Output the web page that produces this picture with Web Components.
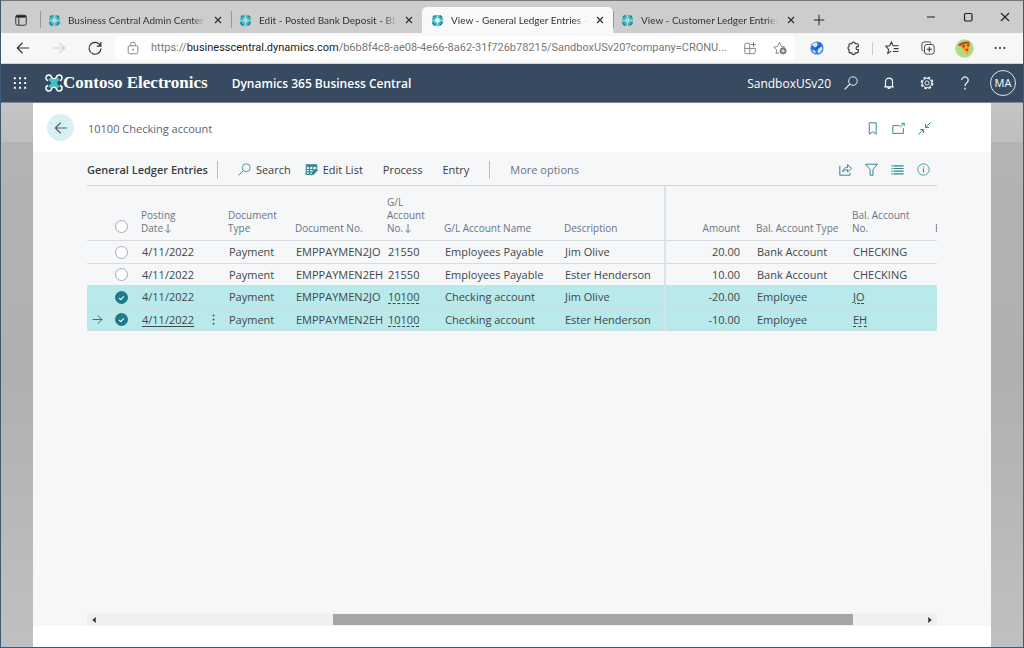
<!DOCTYPE html>
<html lang="en">
<head>
<meta charset="utf-8">
<title>View - General Ledger Entries</title>
<style>
    html, body {
        height: 100%;
        margin: 0;
    }
    body {
        font-family: "Open Sans", "Noto Sans", sans-serif;
        font-size: 11px;
        line-height: 16px;
        color: #444749;
        overflow: hidden;
    }
</style>
</head>
<body>
<browser-window>
    <browser-tab slot="tab">Business Central Admin Center</browser-tab>
    <browser-tab slot="tab">Edit - Posted Bank Deposit - BD000</browser-tab>
    <browser-tab slot="tab" active>View - General Ledger Entries - 10100</browser-tab>
    <browser-tab slot="tab">View - Customer Ledger Entries - 10</browser-tab>
    <browser-toolbar slot="toolbar"></browser-toolbar>
    <app-header company="Contoso Electronics" environment="SandboxUSv20" initials="MA">Dynamics 365 Business Central</app-header>
    <page-dialog>
        <span slot="title">10100 Checking account</span>
        <action-bar slot="actions">General Ledger Entries</action-bar>
        <ledger-table></ledger-table>
        <scroll-strip slot="scroll"></scroll-strip>
    </page-dialog>
</browser-window>

<script>
const icons = {
    tabs: '<rect x="2" y="2.500" width="12" height="11.500" rx="2"/><path d="M2.500 4h11" stroke-width="2.500"/><path d="M5.500 5v9"/>',
    close: '<path d="M4 4l8 8M12 4l-8 8" stroke-width="1.700"/>',
    plus: '<path d="M8 1v14M1 8h14" stroke-width="1.300"/>',
    minimize: '<path d="M4 8h8"/>',
    maximize: '<rect x="4.500" y="4.500" width="7.500" height="7.500" rx="1.200" stroke-width="1.200"/>',
    exit: '<path d="M4 4l8 8M12 4l-8 8" stroke-width="1.100"/>',
    back: '<path d="M15 8H1.500M7.500 2L1.500 8l6 6" stroke-width="1.300"/>',
    forward: '<path d="M1 8H14.500M8.500 2l6 6-6 6" stroke-width="1.200"/>',
    reload: '<path d="M14.200 5.500A6.800 6.800 0 1 0 14.800 8.500M14.700 1v4.800H10" stroke-width="1.400"/>',
    lock: '<rect x="2.500" y="5.500" width="11" height="9" rx="1.500"/><path d="M5.200 5.500V4a2.800 2.800 0 0 1 5.600 0v1.500"/><circle cx="8" cy="10" r=".6" fill="currentColor"/>',
    apps: '<path d="M7.500 2.500H3.500A1.500 1.500 0 0 0 2 4v9A1.500 1.500 0 0 0 3.500 14.500h9a1.500 1.500 0 0 0 1.500-1.500V8.500M2 8.500h12M7.800 2.500v12M12 1v6M9 4h6"/>',
    staradd: '<path d="M7 13l-3.500 1.500.6-4.400L1 7l4.200-.7L7.500 1.500l2.200 4.800 4.300.6"/><circle cx="11.500" cy="11.300" r="3.500" fill="currentColor"/><path d="M11.500 9.300v4M9.500 11.300h4" stroke="#fff"/>',
    globe: '<circle cx="8" cy="8" r="7.500" fill="#2b76d8" stroke="none"/><path d="M2 5c2 0 3 2 4.500 2.200L9 4.500 7.500 1.500C5 1.500 3 2.700 2 5zM9 9.500l4.500-3.500 1 3-3.500 5-2.500-1zM2.500 10l3.500 1 .5 3C4.500 14 3 12.500 2.500 10z" fill="#cfe6fb" stroke="none"/><path d="M6 10l6-6" stroke="#1a5fb4" stroke-width="1.600"/>',
    puzzle: '<path d="M4.500 3.200h2a2 2 0 0 1 4 0h2.500a1 1 0 0 1 1 1v2.300h-.8a1.700 1.700 0 0 0 0 3.400h.8v2.600a1 1 0 0 1-1 1h-2.500a2 2 0 0 1-4 0h-2a1 1 0 0 1-1-1V9.900a1.900 1.900 0 0 1 0-3.600V4.200a1 1 0 0 1 1-1z" stroke-width="1.300"/>',
    favorites: '<path d="M7 11.500l-3.800 2.700.9-4.700L1 6l4.400-.6L7.300 1.200l1.900 4.200M9.200 5.500H15.500M10 8.700h5.500M9 12h6.500" stroke-width="1.200"/>',
    collections: '<path d="M3 11.500A2.200 2.200 0 0 1 1 9.500V3.500A2.500 2.500 0 0 1 3.500 1h6a2.200 2.200 0 0 1 2 2"/><rect x="4" y="4" width="11" height="11" rx="2.500"/><path d="M9.500 6.500v6M6.500 9.500h6" stroke-width="1.200"/>',
    pizza: '<circle cx="8" cy="8" r="7.800" fill="#b5d98a" stroke="none"/><path d="M3 4.800l8.500-2.300 1.600 1.400-2.200 9.600z" fill="#f0a52d" stroke="none"/><path d="M2.600 4.600Q7 1.200 12 2.300l.3 1.600Q7.500 3.300 3.600 6z" fill="#9a5524" stroke="none"/><g fill="#c3362b" stroke="none"><circle cx="7.300" cy="6" r="1.100"/><circle cx="11" cy="5.300" r="1"/><circle cx="10" cy="9" r="1.100"/></g>',
    more: '<g fill="currentColor" stroke="none"><circle cx="3" cy="8" r="1.200"/><circle cx="8" cy="8" r="1.200"/><circle cx="13" cy="8" r="1.200"/></g>',
    waffle: '<path d="M1 2.500h2.200M6.900 2.500h2.200M12.800 2.500h2.200M1 8h2.200M6.900 8h2.200M12.800 8h2.200M1 13.500h2.200M6.900 13.500h2.200M12.800 13.500h2.200" stroke-width="2.200"/>',
    search: '<circle cx="10.200" cy="5.800" r="4.900"/><path d="M6.700 9.300L.8 15.200" stroke-width="1.200"/>',
    bell: '<path d="M2.500 12.500h11M4 12.300V6.500a4 4 0 0 1 8 0v5.800M6.700 13a1.300 1.300 0 0 0 2.600 0" stroke-width="1.300"/>',
    gear: '<circle cx="8" cy="8" r="6.500" stroke-width="1.600" stroke-dasharray="3 2.105"/><circle cx="8" cy="8" r="5.300"/><circle cx="8" cy="8" r="2.400"/>',
    help: '<path d="M4.300 4.700a3.700 3.700 0 1 1 6 2.900C8.800 8.700 8 9.200 8 11.500" stroke-width="1.300"/><path d="M8 13.500v1.800" stroke-width="1.600"/>',
    bookmark: '<path d="M4 1h8.500v14l-4.200-3L4 15z" stroke-width="1.200"/>',
    popout: '<path d="M9.500 4.500H1v9.500h13V7.500M10 6.500l4.500-4.500M11.500 1.500h3.500v3.500" stroke-width="1.200"/>',
    collapse: '<path d="M15.500.5l-6 6M9.300 2.500v4.200h4.200M.5 15.500l6-6M2.500 9.300h4.200v4.200" stroke-width="1.200"/>',
    share: '<path d="M1 3.500v11.500H13.500v-3M4.500 11c.3-4 2.500-5.500 6-5.500V2l5 4.500-5 4.500V8.300c-2.700 0-4.300.5-6 2.700z" stroke-width="1.200"/>',
    filter: '<path d="M.8 1.500h14.500l-5.500 6.500v7H6.300V8z" stroke-width="1.200"/>',
    list: '<path d="M.5 3.500h1.500M3 3.500h12.500M.5 6.800h1.500M3 6.800h12.500M.5 10h1.500M3 10h12.500M.5 13.300h1.500M3 13.300h12.500" stroke-width="1.400"/>',
    info: '<circle cx="8" cy="8" r="7"/><path d="M8 6.800v5M8 4.200v1.300" stroke-width="1.300"/>',
    editlist: '<path d="M1.500 2h13v2.500h-13z" fill="currentColor"/><path d="M1.500 5v9H8M1.500 8h10M1.500 11h7M5.500 5v9M9.700 5v5.500M14.500 5v2" stroke-width="1.400"/><path d="M7.500 15.500l1-4 5-5 2.500 2.500-5 5z" fill="currentColor" stroke="none"/>',
    down: '<path d="M8 0v13.500M4 9.700l4 4 4-4" stroke-width="1.500"/>',
    dots: '<g fill="currentColor" stroke="none"><circle cx="8" cy="2" r="1.300"/><circle cx="8" cy="8" r="1.300"/><circle cx="8" cy="14" r="1.300"/></g>',
    left: '<path d="M10 4.500v7L6 8z" fill="currentColor" stroke="none"/>',
    right: '<path d="M6 4.500v7L10 8z" fill="currentColor" stroke="none"/>',
    favicon: '<circle cx="8" cy="8" r="5" stroke="#35bcc4" stroke-width="4"/><path d="M2.500 4A6.500 6.500 0 0 1 5 2M11 2a6.500 6.500 0 0 1 2.500 2.500M14 10.500a6.500 6.500 0 0 1-3 3M5 14a6.500 6.500 0 0 1-3-3" stroke="#1b808c" stroke-width="1.800"/><path d="M8 1v4M8 11v4M1 8h4M11 8h4" stroke="#8fe3e8" stroke-width="1.500"/>',
    drone: '<path d="M4 4l8 8M12 4l-8 8" stroke="#41c0c4" stroke-width="3"/><circle cx="8" cy="8" r="2.500" fill="#41c0c4" stroke="none"/><g stroke="#fff" stroke-width="1.300"><path d="M2.800 5.800A2.500 2.500 0 1 1 5.800 2.800Q8 6 10.200 2.800A2.500 2.500 0 1 1 13.200 5.800M13.200 10.200A2.500 2.500 0 1 1 10.200 13.200Q8 10 5.800 13.200A2.500 2.500 0 1 1 2.800 10.200"/></g>'
}

class ShadowComponent extends HTMLElement {
    constructor() {
        super()
        this.attachShadow({ mode: 'open' })
    }

    connectedCallback() {
        const template = document.createElement('template')
        template.innerHTML = this.render()
        this.shadowRoot.replaceChildren(template.content.cloneNode(true))
    }
}

// Resets shared by everything that holds buttons
const buttonStyle = `
    button {
        font: inherit;
        color: inherit;
        background: none;
        border: none;
        padding: 0;
        margin: 0;
        display: flex;
        flex: none;
        align-items: center;
        justify-content: center;
    }
`

class LineIcon extends ShadowComponent {
    render() {
        return `
            <style>
                :host {
                    display: inline-block;
                    flex: none;
                    width: var(--icon-size, 14px);
                    height: var(--icon-size, 14px);
                }
                svg {
                    display: block;
                    width: 100%;
                    height: 100%;
                    overflow: visible;
                }
            </style>
            <svg viewBox="0 0 16 16" fill="none" stroke="currentColor" aria-hidden="true">${icons[this.getAttribute("name")]}</svg>
        `
    }
}

class BrowserWindow extends ShadowComponent {
    render() {
        return `
            <style>
                ${buttonStyle}
                :host {
                    display: flex;
                    flex-direction: column;
                    height: 100vh;
                    box-sizing: border-box;
                    border: 1px solid #3c5a72;
                    border-top-color: #77757a;
                    background: #b4b4b4;
                }
                .strip {
                    display: flex;
                    flex: none;
                    height: 32px;
                    background: #cdcdcd;
                    color: #222;
                }
                .strip > button {
                    width: 39px;
                    margin-top: 6px;
                }
                .strip > .add {
                    width: 29px;
                    --icon-size: 12px;
                }
                .controls {
                    display: flex;
                    margin-left: auto;
                }
                .controls button {
                    width: 37px;
                }
                .controls line-icon {
                    --icon-size: 16px;
                }
            </style>
            <div class="strip">
                <button aria-label="Tab actions"><line-icon name="tabs"></line-icon></button>
                <slot name="tab"></slot>
                <button class="add" aria-label="New tab"><line-icon name="plus"></line-icon></button>
                <div class="controls">
                    <button aria-label="Minimize"><line-icon name="minimize"></line-icon></button>
                    <button aria-label="Maximize"><line-icon name="maximize"></line-icon></button>
                    <button aria-label="Close"><line-icon name="exit"></line-icon></button>
                </div>
            </div>
            <slot name="toolbar"></slot>
            <slot></slot>
        `
    }
}

class BrowserTab extends ShadowComponent {
    render() {
        return `
            <style>
                ${buttonStyle}
                :host {
                    display: flex;
                    flex: 0 1 191px;
                    min-width: 0;
                    align-items: center;
                    gap: 7px;
                    box-sizing: border-box;
                    margin-top: 6px;
                    padding: 0 7px;
                    border-left: 1px solid #999;
                    border-image: linear-gradient(transparent 5px, #999 5px 20px, transparent 20px) 1;
                    font-family: Lato, sans-serif;
                    font-size: 10px;
                    color: #333;
                }
                :host([active]) {
                    border: none;
                    border-radius: 5px 5px 0 0;
                    padding: 0 7px 0 9px;
                    background: #f9f9f9;
                }
                .title {
                    flex: 1;
                    overflow: hidden;
                    white-space: nowrap;
                    mask-image: linear-gradient(to right, #000 calc(100% - 12px), transparent);
                }
                line-icon {
                    --icon-size: 13px;
                }
                button line-icon {
                    --icon-size: 12px;
                }
            </style>
            <line-icon name="favicon"></line-icon>
            <span class="title"><slot></slot></span>
            <button aria-label="Close tab"><line-icon name="close"></line-icon></button>
        `
    }
}

class BrowserToolbar extends ShadowComponent {
    render() {
        const button = (name, label) => `<button aria-label="${label}"><line-icon name="${name}"></line-icon></button>`
        return `
            <style>
                ${buttonStyle}
                :host {
                    display: flex;
                    flex: none;
                    align-items: center;
                    box-sizing: border-box;
                    height: 31px;
                    padding: 0 5px 0 4px;
                    background: #f7f7f7;
                    border-bottom: 1px solid #d5d5d5;
                    color: #333;
                }
                button {
                    width: 36px;
                    height: 28px;
                }
                button[aria-label="Forward"] {
                    color: #ccc;
                }
                .address {
                    display: flex;
                    flex: 1;
                    min-width: 0;
                    align-items: center;
                    height: 24px;
                    margin: 0 4px 0 2px;
                    padding-left: 11px;
                    background: #fff;
                    border-radius: 4px;
                    color: #777;
                }
                .address button {
                    width: 30px;
                }
                .url {
                    flex: 1;
                    min-width: 0;
                    padding-left: 11px;
                    color: #777;
                    font-family: Roboto, sans-serif;
                    font-size: 11px;
                    text-decoration: none;
                    white-space: nowrap;
                }
                b {
                    font-weight: normal;
                    color: #222;
                }
                i {
                    width: 1px;
                    height: 13px;
                    margin: 0 1px;
                    background: #ccc;
                }
                .profile {
                    --icon-size: 19px;
                }
            </style>
            ${button("back", "Back")}${button("forward", "Forward")}${button("reload", "Refresh")}
            <div class="address">
                <line-icon name="lock"></line-icon>
                <a class="url" href="#">https://<b>businesscentral.dynamics.com</b>/b6b8f4c8-ae08-4e66-8a62-31f726b78215/SandboxUSv20?company=CRONU...</a>
                ${button("apps", "App available")}${button("staradd", "Add to favorites")}
            </div>
            ${button("globe", "Extension")}${button("puzzle", "Extensions")}<i></i>
            ${button("favorites", "Favorites")}${button("collections", "Collections")}
            <button class="profile" aria-label="Profile"><line-icon name="pizza"></line-icon></button>
            ${button("more", "Settings and more")}
        `
    }
}

class AppHeader extends ShadowComponent {
    render() {
        return `
            <style>
                ${buttonStyle}
                :host {
                    display: flex;
                    flex: none;
                    align-items: center;
                    box-sizing: border-box;
                    height: 39px;
                    padding-right: 1px;
                    background: #374a5f;
                    border-bottom: 1px solid #7b8792;
                    color: #fff;
                }
                button {
                    width: 38px;
                    height: 38px;
                }
                .logo {
                    display: flex;
                    align-items: center;
                    margin-left: 6px;
                    --icon-size: 18px;
                    font: bold 17px/24px "Liberation Serif", serif;
                }
                .product, .environment {
                    padding-top: 2px;
                    font-size: 12px;
                }
                .product {
                    margin-left: 24px;
                    font-weight: 600;
                }
                .environment {
                    margin-left: auto;
                    margin-right: 1px;
                }
                .avatar {
                    width: 26px;
                    height: 26px;
                    margin: 0 6px;
                    border: 1px solid #dfe4e8;
                    border-radius: 50%;
                    box-sizing: border-box;
                }
            </style>
            <button aria-label="App launcher"><line-icon name="waffle"></line-icon></button>
            <span class="logo"><line-icon name="drone"></line-icon>${this.getAttribute("company")}</span>
            <span class="product"><slot></slot></span>
            <span class="environment">${this.getAttribute("environment")}</span>
            <button aria-label="Search"><line-icon name="search"></line-icon></button>
            <button aria-label="Notifications"><line-icon name="bell"></line-icon></button>
            <button aria-label="Settings"><line-icon name="gear"></line-icon></button>
            <button aria-label="Help"><line-icon name="help"></line-icon></button>
            <button class="avatar">${this.getAttribute("initials")}</button>
        `
    }
}

class PageDialog extends ShadowComponent {
    render() {
        return `
            <style>
                ${buttonStyle}
                :host {
                    display: flex;
                    flex: 1;
                    min-height: 0;
                    padding: 0 32px;
                    background:
                        linear-gradient(#c4c4c4, #bebebe 39px, #b0b0b0 39px 40px, transparent 40px),
                        linear-gradient(to bottom, #b4b4b4, #b0b0b0 50%, #c0c0c0);
                }
                .dialog {
                    display: flex;
                    flex-direction: column;
                    flex: 1;
                    min-width: 0;
                    background: #fff;
                }
                header {
                    display: flex;
                    align-items: center;
                    height: 49px;
                    padding: 0 54px 0 14px;
                    color: #5c6675;
                }
                .back {
                    width: 27px;
                    height: 27px;
                    margin-right: 14px;
                    border-radius: 50%;
                    background: #d9f0f2;
                    color: #505c6d;
                }
                ::slotted([slot="title"]), .tools {
                    padding-top: 2px;
                }
                .tools {
                    display: flex;
                    margin-left: auto;
                    color: #2f8790;
                    --icon-size: 13px;
                }
                .tools button {
                    width: 26px;
                }
                main {
                    display: flex;
                    flex-direction: column;
                    flex: 1;
                    min-height: 0;
                    margin-bottom: 21px;
                    padding: 0 54px;
                    background: #f5f7f9;
                }
                .content {
                    flex: 1;
                    min-height: 0;
                    overflow: hidden;
                }
            </style>
            <div class="dialog">
                <header>
                    <button class="back" aria-label="Back"><line-icon name="back"></line-icon></button>
                    <slot name="title"></slot>
                    <div class="tools">
                        <button aria-label="Bookmark"><line-icon name="bookmark"></line-icon></button>
                        <button aria-label="Open in new window"><line-icon name="popout"></line-icon></button>
                        <button aria-label="Collapse"><line-icon name="collapse"></line-icon></button>
                    </div>
                </header>
                <main>
                    <slot name="actions"></slot>
                    <div class="content"><slot></slot></div>
                    <slot name="scroll"></slot>
                </main>
            </div>
        `
    }
}

class ActionBar extends ShadowComponent {
    render() {
        return `
            <style>
                ${buttonStyle}
                :host {
                    display: flex;
                    flex: none;
                    align-items: center;
                    box-sizing: border-box;
                    height: 34px;
                    padding: 2px 1px 0 0;
                    border-bottom: 1px solid #d3d6d9;
                    color: #3a3d40;
                    --icon-size: 13px;
                }
                h1 {
                    margin: 0;
                    font-size: 11px;
                    font-weight: 600;
                    line-height: 16px;
                }
                .divider {
                    width: 1px;
                    height: 18px;
                    background: #b9bdc1;
                }
                h1 + .divider {
                    margin: 0 20px 0 9px;
                }
                .menu {
                    display: flex;
                    gap: 14px;
                    margin-right: 20px;
                }
                .menu button {
                    gap: 5px;
                }
                .menu .plain {
                    margin-left: 6px;
                }
                .menu line-icon, .tools {
                    color: #2f8790;
                }
                .more {
                    margin-left: 20px;
                    color: #6b7482;
                }
                .tools {
                    display: flex;
                    margin-left: auto;
                }
                .tools button {
                    width: 26px;
                }
            </style>
            <h1><slot></slot></h1>
            <span class="divider"></span>
            <div class="menu">
                <button><line-icon name="search"></line-icon>Search</button>
                <button><line-icon name="editlist"></line-icon>Edit List</button>
                <button class="plain">Process</button>
                <button class="plain">Entry</button>
            </div>
            <span class="divider"></span>
            <button class="more">More options</button>
            <div class="tools">
                <button aria-label="Share"><line-icon name="share"></line-icon></button>
                <button aria-label="Filter"><line-icon name="filter"></line-icon></button>
                <button aria-label="Show as list"><line-icon name="list"></line-icon></button>
                <button aria-label="Details"><line-icon name="info"></line-icon></button>
            </div>
        `
    }
}

class LedgerTable extends ShadowComponent {
    constructor() {
        super()
        this.entries = [
            { no: "EMPPAYMEN2JO", account: "21550", name: "Employees Payable", text: "Jim Olive", amount: "20.00", type: "Bank Account", bal: "CHECKING" },
            { no: "EMPPAYMEN2EH", account: "21550", name: "Employees Payable", text: "Ester Henderson", amount: "10.00", type: "Bank Account", bal: "CHECKING" },
            { no: "EMPPAYMEN2JO", account: "10100", name: "Checking account", text: "Jim Olive", amount: "-20.00", type: "Employee", bal: "JO", selected: true },
            { no: "EMPPAYMEN2EH", account: "10100", name: "Checking account", text: "Ester Henderson", amount: "-10.00", type: "Employee", bal: "EH", selected: true, current: true }
        ]
    }

    renderRow(entry) {
        const link = value => entry.selected ? `<a href="#">${value}</a>` : value
        return `
            <tr class="${entry.selected ? "selected" : ""}">
                <td class="icon">${entry.current ? '<line-icon name="forward"></line-icon>' : ""}</td>
                <td class="icon"><input type="checkbox" aria-label="Select row" ${entry.selected ? "checked" : ""}></td>
                <td>${entry.current ? '<a class="focused" href="#">4/11/2022</a>' : "4/11/2022"}</td>
                <td class="icon">${entry.current ? '<button aria-label="Show more options"><line-icon name="dots"></line-icon></button>' : ""}</td>
                <td>Payment</td>
                <td>${entry.no}</td>
                <td>${link(entry.account)}</td>
                <td>${entry.name}</td>
                <td>${entry.text}</td>
                <td class="amount">${entry.amount}</td>
                <td>${entry.type}</td>
                <td>${link(entry.bal)}</td>
                <td></td>
            </tr>
        `
    }

    render() {
        const widths = [20, 29, 68, 19, 67, 92, 57, 120, 105, 87, 96, 83]
        return `
            <style>
                ${buttonStyle}
                :host {
                    display: block;
                }
                table {
                    width: 100%;
                    table-layout: fixed;
                    border-collapse: separate;
                    border-spacing: 0;
                }
                th, td {
                    box-sizing: border-box;
                    padding: 0 0 0 5px;
                    border-bottom: 1px solid #d9dcdf;
                    text-align: left;
                    white-space: nowrap;
                }
                th {
                    height: 55px;
                    padding-bottom: 5px;
                    vertical-align: bottom;
                    font-size: 10px;
                    font-weight: normal;
                    line-height: 13px;
                    color: #6b7482;
                }
                td {
                    height: 23px;
                    padding-left: 6px;
                }
                tr:nth-child(even) td {
                    height: 22px;
                }
                .selected td {
                    background: #b8e9eb;
                    border-bottom-color: #c8dfe1;
                }
                .icon {
                    padding-left: 0;
                    text-align: center;
                    line-height: 0;
                }
                th.icon {
                    padding-bottom: 7px;
                }
                .icon > * {
                    margin: 0 auto;
                    vertical-align: middle;
                }
                .icon line-icon {
                    --icon-size: 11px;
                }
                .amount {
                    padding-right: 11px;
                    text-align: right;
                    border-left: 2px solid #dfe2e4;
                }
                input {
                    display: inline-grid;
                    place-content: center;
                    appearance: none;
                    box-sizing: border-box;
                    width: 13px;
                    height: 13px;
                    border: 1px solid #a5abb5;
                    border-radius: 50%;
                    background: #fff;
                }
                input:checked {
                    border-color: #217a87;
                    background: #217a87;
                }
                input:checked::after {
                    content: "";
                    width: 4px;
                    height: 2px;
                    border: solid #fff;
                    border-width: 0 0 1px 1px;
                    transform: rotate(-45deg);
                }
                a {
                    color: inherit;
                    text-decoration: underline dashed 1px;
                    text-underline-offset: 2px;
                }
                .focused {
                    text-decoration-style: solid;
                }
                .sort {
                    --icon-size: 10px;
                    vertical-align: middle;
                }
            </style>
            <table>
                <colgroup>${widths.map(width => `<col style="width: ${width}px">`).join("")}<col></colgroup>
                <thead>
                    <tr>
                        <th></th>
                        <th class="icon"><input type="checkbox" aria-label="Select all rows"></th>
                        <th>Posting<br>Date<line-icon class="sort" name="down"></line-icon></th>
                        <th></th>
                        <th>Document<br>Type</th>
                        <th>Document No.</th>
                        <th>G/L<br>Account<br>No.<line-icon class="sort" name="down"></line-icon></th>
                        <th>G/L Account Name</th>
                        <th>Description</th>
                        <th class="amount">Amount</th>
                        <th>Bal. Account Type</th>
                        <th>Bal. Account<br>No.</th>
                        <th>E</th>
                    </tr>
                </thead>
                <tbody>${this.entries.map(entry => this.renderRow(entry)).join("")}</tbody>
            </table>
        `
    }
}

class ScrollStrip extends ShadowComponent {
    render() {
        return `
            <style>
                ${buttonStyle}
                :host {
                    display: flex;
                    flex: none;
                    height: 13px;
                    background: #f0f0f0;
                    color: #333;
                }
                button {
                    width: 14px;
                }
                .track {
                    display: flex;
                    flex: 1;
                    padding: 1px 0;
                }
                .before {
                    flex: 232;
                }
                .thumb {
                    flex: 520;
                    background: #a6a6a6;
                }
                .after {
                    flex: 70;
                }
            </style>
            <button aria-label="Scroll left"><line-icon name="left"></line-icon></button>
            <div class="track">
                <span class="before"></span><span class="thumb"></span><span class="after"></span>
            </div>
            <button aria-label="Scroll right"><line-icon name="right"></line-icon></button>
        `
    }
}

customElements.define('line-icon', LineIcon)
customElements.define('browser-window', BrowserWindow)
customElements.define('browser-tab', BrowserTab)
customElements.define('browser-toolbar', BrowserToolbar)
customElements.define('app-header', AppHeader)
customElements.define('page-dialog', PageDialog)
customElements.define('action-bar', ActionBar)
customElements.define('ledger-table', LedgerTable)
customElements.define('scroll-strip', ScrollStrip)
</script>
</body>
</html>
